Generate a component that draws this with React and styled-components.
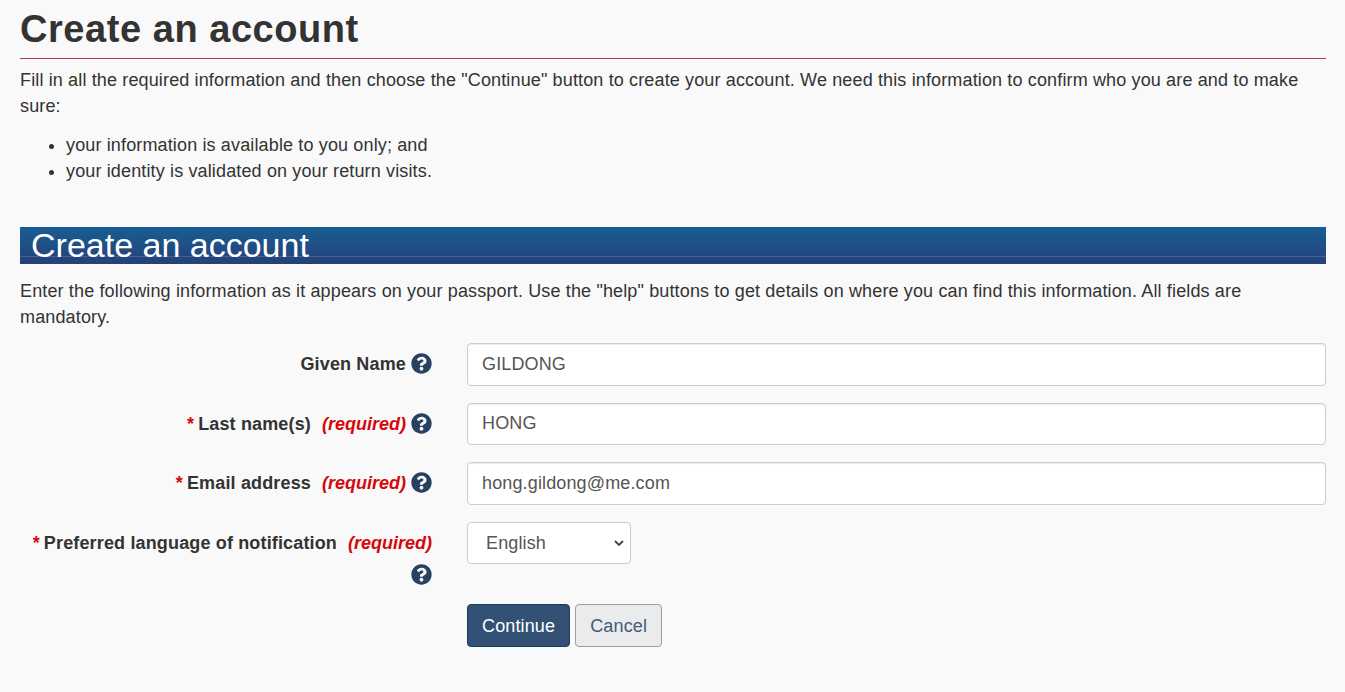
import React from "react";
import styled, { createGlobalStyle } from "styled-components";
import { FaQuestionCircle } from "react-icons/fa";

const Global = createGlobalStyle`
	* {
		box-sizing: border-box;
	}
	html,
	body {
		margin: 0;
		background: #f9f9f9;
	}
	body {
		font-family: "Liberation Sans", Arial, sans-serif;
		font-size: 18px;
		line-height: 26px;
		letter-spacing: 0.14px;
		color: #333333;
	}
`;

const Page = styled.main`
	padding: 0 19px 0 20px;
	height: 692px;
	overflow: hidden;
`;

const Title = styled.h1`
	margin: 0 0 8px;
	padding: 9px 0 8px;
	font-size: 38px;
	line-height: 41px;
	font-weight: 700;
	letter-spacing: 0.55px;
	border-bottom: 1px solid #af3c43;
`;

const Text = styled.p`
	margin: 0 0 13px;
`;

const List = styled.ul`
	margin: 0 0 43px;
	padding-left: 46px;
`;

const Banner = styled.h2`
	margin: 0 0 14px;
	height: 37px;
	padding-left: 11px;
	font-size: 34px;
	line-height: 37px;
	font-weight: 400;
	letter-spacing: 0;
	color: #ffffff;
	background:
		linear-gradient(rgba(255, 255, 255, 0.15), rgba(255, 255, 255, 0.15)) left 0 top 29px / 100% 1px no-repeat,
		linear-gradient(#175e93, #264079);
`;

const Form = styled.form`
	margin-top: 12px;
`;

const Row = styled.div`
	display: grid;
	grid-template-columns: 412px 1fr;
	column-gap: 35px;
	margin-bottom: 17px;
`;

const Label = styled.label`
	display: block;
	padding: 8px 0 ${(p) => (p.$wrapped ? "2px" : "0")};
	text-align: right;
	font-weight: 700;
	letter-spacing: 0.15px;
`;

const Star = styled.span`
	color: #d3080c;
	margin-right: 4px;
`;

const Required = styled.em`
	color: #d3080c;
	margin-left: 11px;
	font-weight: 700;
	letter-spacing: 0;
`;

const Help = styled(FaQuestionCircle)`
	color: #284162;
	width: 21px;
	height: 21px;
	margin-left: 5px;
	vertical-align: -4px;
`;

const HelpBelow = styled(Help)`
	display: block;
	margin: 8px 0 0 auto;
`;

const Input = styled.input`
	display: block;
	width: 100%;
	height: 42.5px;
	padding: 6px 14px;
	font: inherit;
	letter-spacing: 0.14px;
	color: #555555;
	background: #ffffff;
	border: 1px solid #cccccc;
	border-radius: 4px;
	box-shadow: inset 0 1px 1px rgba(0, 0, 0, 0.075);
`;

const Select = styled.select`
	display: block;
	width: 164px;
	height: 42.5px;
	padding: 6px 18px;
	font: inherit;
	letter-spacing: 0.14px;
	color: #555555;
	background: #ffffff url("data:image/svg+xml,%3Csvg xmlns='http://www.w3.org/2000/svg' width='10' height='6'%3E%3Cpath d='M1 1l4 4 4-4' fill='none' stroke='%23444' stroke-width='1.8'/%3E%3C/svg%3E") no-repeat right 6px center;
	border: 1px solid #cccccc;
	border-radius: 4px;
	appearance: none;
`;

const Actions = styled.div`
	display: flex;
	gap: 5px;
	margin-left: 447px;
`;

const Button = styled.button`
	height: 43px;
	padding: 2px 14px 0;
	font: inherit;
	letter-spacing: 0.14px;
	border-radius: 4px;
	border: 1px solid ${(p) => (p.$primary ? "#1c3a5a" : "#9a9ea3")};
	color: ${(p) => (p.$primary ? "#ffffff" : "#435a78")};
	background: ${(p) => (p.$primary ? "#335075" : "#eaebed")};
`;

const fields = [
	{ id: "given", label: "Given Name", value: "GILDONG" },
	{ id: "last", label: "Last name(s)", value: "HONG", required: true },
	{ id: "email", label: "Email address", value: "hong.gildong@me.com", required: true },
];

const App = () => {
	return (
		<>
			<Global />
			<Page>
				<Title>Create an account</Title>
				<Text>
					Fill in all the required information and then choose the "Continue" button to create your account. We need
					this information to confirm who you are and to make sure:
				</Text>
				<List>
					<li>your information is available to you only; and</li>
					<li>your identity is validated on your return visits.</li>
				</List>
				<Banner>Create an account</Banner>
				<Text>
					Enter the following information as it appears on your passport. Use the "help" buttons to get details on
					where you can find this information. All fields are mandatory.
				</Text>
				<Form>
					{fields.map((f) => (
						<Row key={f.id}>
							<Label htmlFor={f.id}>
								{f.required && <Star>*</Star>}
								{f.label}
								{f.required && <Required>(required)</Required>}
								<Help />
							</Label>
							<Input id={f.id} defaultValue={f.value} />
						</Row>
					))}
					<Row>
						<Label htmlFor="lang" $wrapped>
							<Star>*</Star>
							Preferred language of notification
							<Required>(required)</Required>
							<HelpBelow />
						</Label>
						<Select id="lang" defaultValue="English">
							<option>English</option>
							<option>Français</option>
						</Select>
					</Row>
					<Actions>
						<Button type="button" $primary>
							Continue
						</Button>
						<Button type="button">Cancel</Button>
					</Actions>
				</Form>
			</Page>
		</>
	);
};

export default App;
